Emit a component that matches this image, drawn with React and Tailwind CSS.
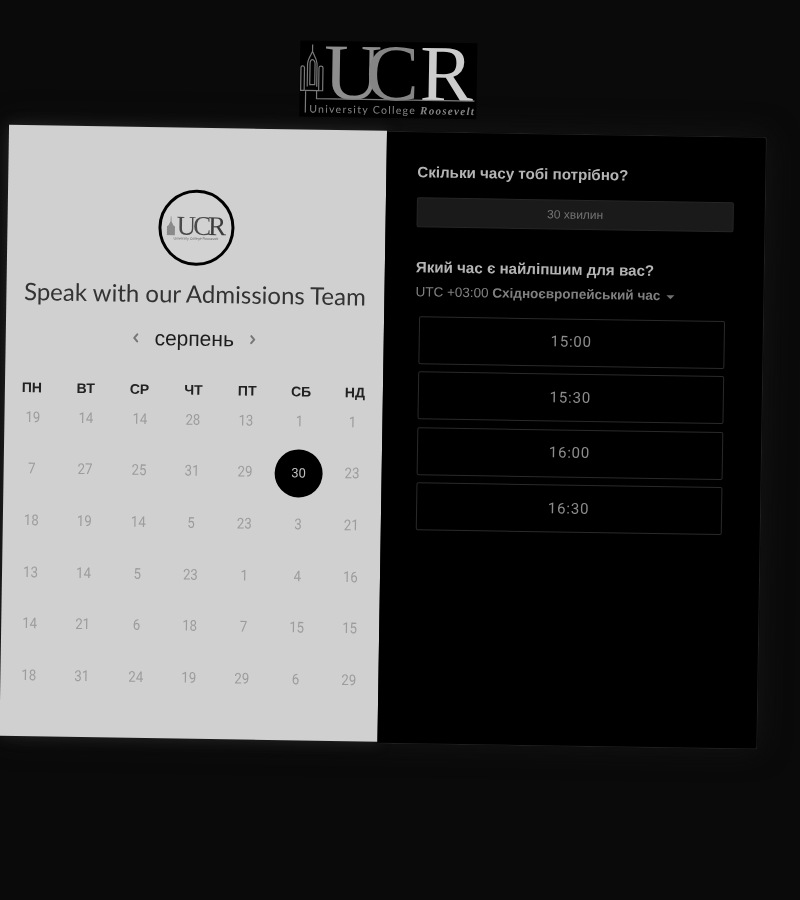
const headers = ["ПН", "ВТ", "СР", "ЧТ", "ПТ", "СБ", "НД"];
const days = [19,14,14,28,13,1,1,7,27,25,31,29,30,23,18,19,14,5,23,3,21,13,14,5,23,1,4,16,14,21,6,18,7,15,15,18,31,24,19,29,6,29];
const times = ["15:00", "15:30", "16:00", "16:30"];

function Tower({ className }) {
  return (
    <svg viewBox="0 0 177 76" className={className} fill="none" stroke="currentColor" strokeWidth="1.2">
      <path d="M12.3 4 V11 M12.3 11 C11 14 8 18 7.5 23 V46 M12.3 11 C13.6 14 16.5 18 17 23 V46" />
      <path d="M10 23 V44 H15 V23 C15 21 13.5 19 12.5 19 C11 19 10 21 10 23 Z" />
      <path d="M1 27 C1 25 4 25 4.5 27 V50 H1 Z M19 27 C19 25 23 25 23 27 V50 H19 Z" />
      <path d="M5 50 H19 M6 50 V72 M17 50 V58 H175" />
    </svg>
  );
}

function Logo() {
  return (
    <div className="relative w-[177px] h-[76px] bg-black mx-auto overflow-hidden">
      <Tower className="absolute inset-0 w-[177px] h-[76px] text-[#7a7a7a]" />
      <div className="pl-[24px] h-[58px] text-[80px] leading-[62px] font-['Liberation_Serif',serif] whitespace-nowrap">
        <span className="text-[#8e8e8e]">U</span>
        <span className="text-[#858585] -ml-[16px]">C</span>
        <span className="text-[#cdcdcd] ml-[1px]">R</span>
      </div>
      <div className="pl-[10px] mt-[1px] text-[#858585] whitespace-nowrap leading-[14px]">
        <span className="font-['Lato',sans-serif] text-[10.5px] tracking-[1.3px]">University College </span>
        <span className="font-['Liberation_Serif',serif] italic font-bold text-[11px] tracking-[1.3px]">Roosevelt</span>
      </div>
    </div>
  );
}

function SmallLogo() {
  return (
    <div className="w-[76px] h-[76px] rounded-full border-[3px] border-black bg-[#d2d2d2] flex flex-col items-center justify-center">
      <div className="flex items-end text-[#3c3c3c] font-['Liberation_Serif',serif] leading-[20px] text-[27px] tracking-[-3px] pr-[2px]">
        <svg viewBox="0 0 9 20" className="w-[9px] h-[20px] mr-[1px] text-[#8a8a8a]" fill="currentColor">
          <path d="M4.2 1 L4.8 1 L5 6 L7 10 L8.5 11 L8.5 20 L0.5 20 L0.5 11 L2 10 L4 6 Z" />
        </svg>
        <span className="text-[#4a4a4a]">UC</span>
        <span>R</span>
      </div>
      <div className="text-[3.5px] leading-[4px] mt-[1px] text-[#666] font-['Liberation_Sans',sans-serif] whitespace-nowrap">University College Roosevelt</div>
    </div>
  );
}

function Chevron({ dir }) {
  return (
    <svg width="10" height="12" viewBox="0 0 10 12" fill="none" stroke="#777" strokeWidth="2" strokeLinecap="round" strokeLinejoin="round">
      <path d={dir === "left" ? "M6.5 2.5 L3.5 6 L6.5 9.5" : "M3.5 2.5 L6.5 6 L3.5 9.5"} />
    </svg>
  );
}

export default function App() {
  return (
    <div className="w-[800px] h-[900px] overflow-hidden bg-[#0a0a0a] grayscale blur-[0.35px]">
      <div className="w-[800px] h-[900px] rotate-[0.9deg]">
        <div className="w-[758.5px] ml-[3.5px] pt-[42px]">
          <div className="-ml-[0.75px]">
            <Logo />
          </div>
          <div className="mt-[13px] h-[611px] flex shadow-[0_0_30px_#161616] rounded-[3px]">
            <div className="w-[378px] bg-[#d0d0d0] flex flex-col items-center pt-[62px] shrink-0 shadow-[0_0_14px_#262626]">
              <SmallLogo />
              <div className="mt-[12.5px] h-[30px] leading-[30px] text-[24px] text-[#333] font-['Lato',sans-serif] whitespace-nowrap">
                Speak with our Admissions Team
              </div>
              <div className="mt-[16.5px] h-[28px] flex items-center gap-[14px]">
                <Chevron dir="left" />
                <span className="text-[21px] text-[#1c1c1c] font-['Liberation_Sans',sans-serif]">серпень</span>
                <Chevron dir="right" />
              </div>
              <div className="mt-[27px] px-[0.5px] w-full grid grid-cols-7 h-[20px] items-center">
                {headers.map((h) => (
                  <div key={h} className="text-center text-[14px] font-bold text-[#222] font-['Liberation_Sans',sans-serif]">{h}</div>
                ))}
              </div>
              <div className="mt-[2px] px-[2.5px] w-full grid grid-cols-7 auto-rows-[36px] gap-y-[15.6px]">
                {days.map((d, i) => (
                  <div key={i} className="flex items-center justify-center">
                    {i === 12 ? (
                      <span className="w-[48px] h-[48px] shrink-0 rounded-full bg-black text-[#c0c0c0] flex items-center justify-center text-[13px] font-['Roboto',sans-serif]">{d}</span>
                    ) : (
                      <span className="text-[#9c9c9c] text-[15px] scale-x-[0.88] font-['Roboto',sans-serif]">{d}</span>
                    )}
                  </div>
                ))}
              </div>
            </div>
            <div className="flex-1 h-[613px] bg-black border border-[#1f1f1f] border-l-0 rounded-r-[3px] pl-[31.5px] font-['Liberation_Sans',sans-serif]">
              <div className="mt-[30px] h-[20px] leading-[20px] text-[15.15px] font-bold text-[#b4b4b4] whitespace-nowrap">Скільки часу тобі потрібно?</div>
              <div className="mt-[15px] w-[317px] h-[30px] bg-[#1a1a1a] border border-[#262626] rounded-[2px] flex items-center justify-center text-[12px] text-[#737373]">30 хвилин</div>
              <div className="mt-[30px] h-[20px] leading-[20px] text-[15.15px] font-bold text-[#b4b4b4] whitespace-nowrap">Який час є найліпшим для вас?</div>
              <div className="mt-[5.5px] h-[18px] leading-[18px] text-[13.5px] text-[#808080] flex items-center whitespace-nowrap">
                <span>UTC +03:00&nbsp;</span>
                <span className="font-bold">Східноєвропейський час</span>
                <span className="ml-[6px] mt-[2px] w-0 h-0 border-x-[4px] border-x-transparent border-t-[4px] border-t-[#707070]"></span>
              </div>
              <div className="mt-[15px] ml-[3.5px] flex flex-col gap-[7.5px]">
                {times.map((t) => (
                  <div key={t} className="w-[306px] h-[48px] border border-[#2a2a2a] rounded-[2px] flex items-center justify-center text-[15px] tracking-[0.8px] text-[#8c8c8c] font-['Roboto',sans-serif]">{t}</div>
                ))}
              </div>
            </div>
          </div>
        </div>
      </div>
    </div>
  );
}
